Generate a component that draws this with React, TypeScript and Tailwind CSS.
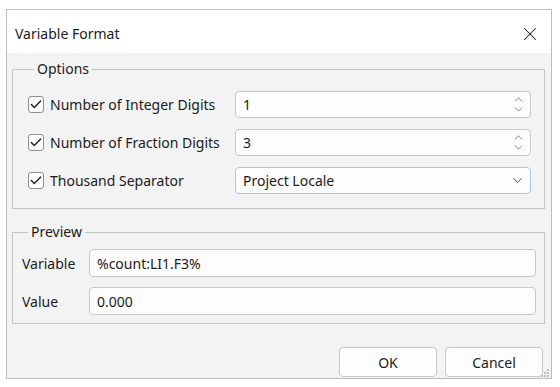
import React from 'react';
import { X, Check, ChevronUp, ChevronDown } from 'lucide-react';

const font = { fontFamily: '"Noto Sans", "Open Sans", sans-serif' };

const CheckBox: React.FC = () => (
  <span className="w-[16px] h-[17px] rounded-[3px] border border-[#8f8f8f] bg-[#fdfdfd] flex items-center justify-center shrink-0">
    <Check size={15} strokeWidth={2.3} className="text-[#1b1b1b]" />
  </span>
);

const SpinBox: React.FC<{ value: string }> = ({ value }) => (
  <div className="w-[296px] h-[27px] rounded-[4px] border border-[#c8c8c8] bg-[#fdfdfd] flex items-center pl-[7px] pr-[5px]">
    <span className="flex-1 text-[#1b1b1b]">{value}</span>
    <span className="flex flex-col items-center -space-y-[3px]">
      <ChevronUp size={13} strokeWidth={1.2} className="text-[#444]" />
      <ChevronDown size={13} strokeWidth={1.2} className="text-[#444]" />
    </span>
  </div>
);

const Row: React.FC<{ label: string; children: React.ReactNode }> = ({ label, children }) => (
  <div className="flex items-center h-[27px]">
    <CheckBox />
    <span className="ml-[6px] w-[185px] text-[#1b1b1b]">{label}</span>
    {children}
  </div>
);

const TextField: React.FC<{ label: string; value: string }> = ({ label, value }) => (
  <div className="flex items-center">
    <span className="w-[67px] text-[#1b1b1b]">{label}</span>
    <div className="flex-1 h-[28px] rounded-[4px] border border-[#c8c8c8] bg-[#fdfdfd] flex items-center px-[7px] text-[#1b1b1b]">
      {value}
    </div>
  </div>
);

export default function App() {
  return (
    <div className="w-[560px] h-[387px] bg-white pt-[9px] pl-[6px] text-[14px]" style={font}>
      <div className="w-[546px] h-[370px] border border-[#bcbcbc] flex flex-col">
        {/* Title bar */}
        <div className="h-[43px] bg-white flex items-center justify-between pl-[8px] pr-[10px] shrink-0">
          <span className="text-[#1b1b1b] mt-[4px]">Variable Format</span>
          <X size={22} strokeWidth={1.1} className="text-[#1b1b1b] mt-[4px]" />
        </div>

        <div className="flex-1 bg-[#f3f3f3] pl-[5px] pr-[5px] flex flex-col">
          {/* Options */}
          <fieldset className="border border-[#c4c4c4] mt-[8px] w-[533px] h-[148px] pl-[15px] pr-[13px]">
            <legend className="ml-[6px] px-[3px] text-[#1b1b1b] leading-[16px]">Options</legend>
            <div className="flex flex-col gap-[11px] mt-[14px]">
              <Row label="Number of Integer Digits">
                <SpinBox value="1" />
              </Row>
              <Row label="Number of Fraction Digits">
                <SpinBox value="3" />
              </Row>
              <Row label="Thousand Separator">
                <div className="w-[296px] h-[27px] rounded-[4px] border border-[#a9c3f2] bg-[#fdfdfd] flex items-center pl-[7px] pr-[5px]">
                  <span className="flex-1 text-[#1b1b1b]">Project Locale</span>
                  <ChevronDown size={15} strokeWidth={1.4} className="text-[#333]" />
                </div>
              </Row>
            </div>
          </fieldset>

          {/* Preview */}
          <fieldset className="border border-[#c4c4c4] mt-[15px] w-[533px] h-[100px] pl-[9px] pr-[8px]">
            <legend className="ml-[6px] px-[3px] text-[#1b1b1b] leading-[16px]">Preview</legend>
            <div className="flex flex-col gap-[10px] mt-[9px]">
              <TextField label="Variable" value="%count:LI1.F3%" />
              <TextField label="Value" value="0.000" />
            </div>
          </fieldset>

          <div className="flex-1" />
          <div className="flex justify-end gap-[8px] pr-[3px] pb-[1px] relative">
            <button className="w-[98px] h-[30px] rounded-[4px] border border-[#c8c8c8] bg-[#fdfdfd] text-[#1b1b1b]">OK</button>
            <button className="w-[98px] h-[30px] rounded-[4px] border border-[#c8c8c8] bg-[#fdfdfd] text-[#1b1b1b]">Cancel</button>
            <svg className="absolute right-[-4px] bottom-0" width="9" height="9" viewBox="0 0 9 9">
              <rect x="6" y="0" width="2" height="2" fill="#bdbdbd" />
              <rect x="3" y="3" width="2" height="2" fill="#bdbdbd" />
              <rect x="6" y="3" width="2" height="2" fill="#bdbdbd" />
              <rect x="0" y="6" width="2" height="2" fill="#bdbdbd" />
              <rect x="3" y="6" width="2" height="2" fill="#bdbdbd" />
              <rect x="6" y="6" width="2" height="2" fill="#bdbdbd" />
            </svg>
          </div>
        </div>
      </div>
    </div>
  );
}
